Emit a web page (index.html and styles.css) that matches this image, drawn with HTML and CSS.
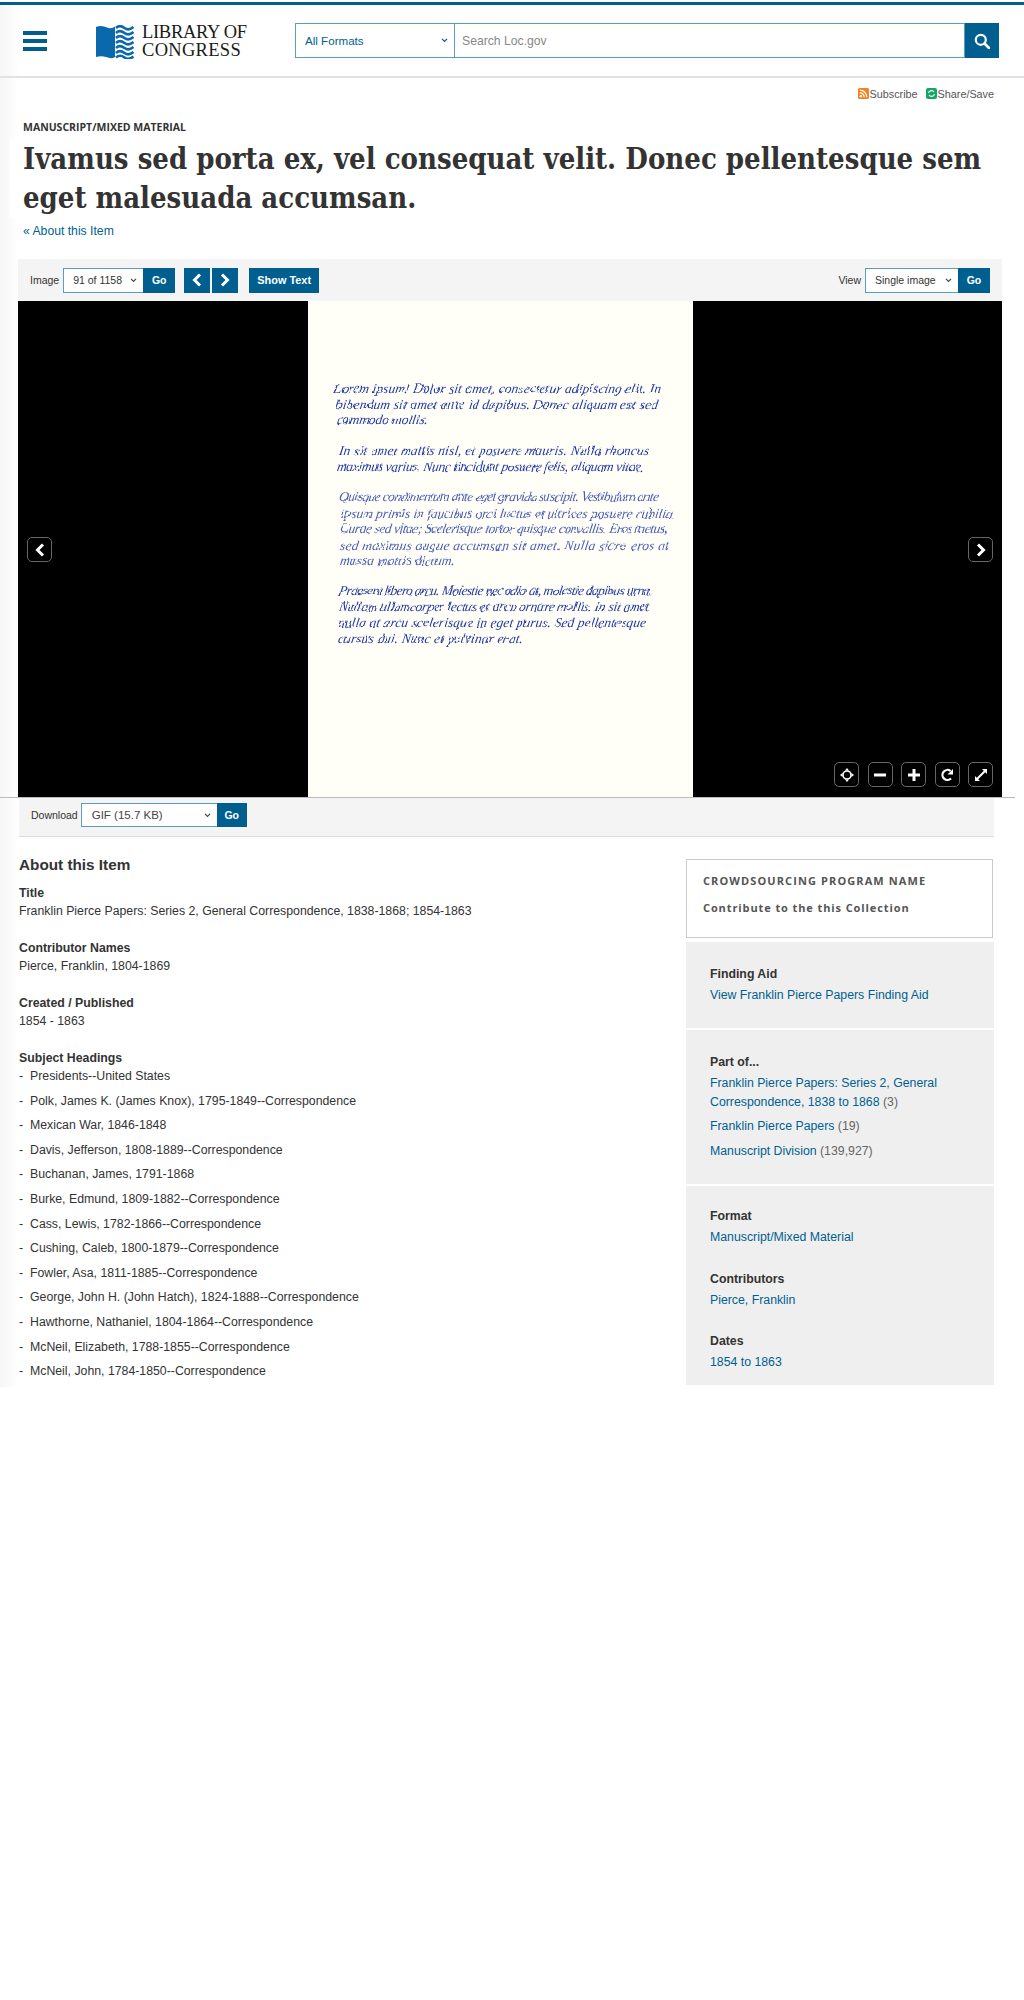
FILE: index.html
```html
<!DOCTYPE html>
<html lang="en">
<head>
    <meta charset="UTF-8">
    <meta name="viewport" content="width=device-width, initial-scale=1.0">
    <title>Library of Congress - Item viewer</title>
    <link rel="stylesheet" href="styles.css">
</head>
<body>

    <!-- Site header -->
    <header class="site-header">
        <button class="menu-btn" aria-label="Menu">
            <span></span><span></span><span></span>
        </button>
        <a class="logo" href="#">
            <svg class="logo-mark" viewBox="0 0 38 34" width="38" height="34">
                <path d="M0 2 C4 0 8 1 11 2.5 C14 4 17 3 19 1.5 L19 32 C16 34 13 33 10 32 C7 31 3 31 0 32 Z" fill="#0a68ad"/>
                <g fill="none" stroke="#0a68ad" stroke-width="2.6">
                    <path d="M20 3 C23 0 26 1 28.5 3 S34 5 37.5 2"/>
                    <path d="M20 8 C23 5 26 6 28.5 8 S34 10 37.5 7"/>
                    <path d="M20 13 C23 10 26 11 28.5 13 S34 15 37.5 12"/>
                    <path d="M20 18 C23 15 26 16 28.5 18 S34 20 37.5 17"/>
                    <path d="M20 23 C23 20 26 21 28.5 23 S34 25 37.5 22"/>
                    <path d="M20 28 C23 25 26 26 28.5 28 S34 30 37.5 27"/>
                    <path d="M20 32.5 C23 30 26 30.5 28.5 32.5 S34 34 37.5 31.5"/>
                </g>
            </svg>
            <span class="logo-text">
                <span class="logo-top">LIBRARY OF</span>
                <span class="logo-bottom">CONGRESS</span>
            </span>
        </a>
        <form class="search-form">
            <div class="search-select">
                <span>All Formats</span>
                <svg class="chevron" viewBox="0 0 8 6" width="7" height="5"><path d="M1 1 L4 4 L7 1" fill="none" stroke="#005f8f" stroke-width="1.5"/></svg>
            </div>
            <div class="search-input">Search Loc.gov</div>
            <button class="search-btn" aria-label="Search">
                <svg viewBox="0 0 16 16" width="16" height="16"><circle cx="6.8" cy="6.8" r="5" fill="none" stroke="#fff" stroke-width="2.2"/><path d="M10.5 10.5 L15 15" stroke="#fff" stroke-width="2.6" stroke-linecap="round"/></svg>
            </button>
        </form>
    </header>

    <main class="page">
        <div class="share-row">
            <a href="#">
                <svg viewBox="0 0 11 11" width="11" height="11"><rect width="11" height="11" rx="1.5" fill="#f58220"/><circle cx="2.8" cy="8.2" r="1.2" fill="#fff"/><path d="M1.8 4.8 A4.4 4.4 0 0 1 6.2 9.2 M1.8 2.2 A7 7 0 0 1 8.8 9.2" fill="none" stroke="#fff" stroke-width="1.3"/></svg>
                Subscribe
            </a>
            <a href="#">
                <svg viewBox="0 0 11 11" width="11" height="11"><rect width="11" height="11" rx="2" fill="#12a862"/><path d="M2.5 5 A3 3 0 0 1 8 4 M8.5 6 A3 3 0 0 1 3 7" fill="none" stroke="#fff" stroke-width="1.2"/></svg>
                Share/Save
            </a>
        </div>

        <div class="item-head">
            <div class="item-type">MANUSCRIPT/MIXED MATERIAL</div>
            <h1>Ivamus sed porta ex, vel consequat velit. Donec pellentesque sem eget malesuada accumsan.</h1>
            <a class="back-link" href="#">« About this Item</a>
        </div>

        <!-- Viewer toolbar -->
        <div class="viewer-bar">
            <label>Image</label>
            <div class="field">
                <div class="select image-select"><span>91 of 1158</span>
                    <svg class="chevron" viewBox="0 0 8 6" width="7" height="5"><path d="M1 1 L4 4 L7 1" fill="none" stroke="#444" stroke-width="1.4"/></svg>
                </div>
                <button class="go-btn">Go</button>
            </div>
            <div class="pager">
                <button class="page-btn" aria-label="Previous">
                    <svg viewBox="0 0 10 14" width="10" height="14"><path d="M8 1.5 L2.5 7 L8 12.5" fill="none" stroke="#fff" stroke-width="3"/></svg>
                </button>
                <button class="page-btn" aria-label="Next">
                    <svg viewBox="0 0 10 14" width="10" height="14"><path d="M2 1.5 L7.5 7 L2 12.5" fill="none" stroke="#fff" stroke-width="3"/></svg>
                </button>
            </div>
            <button class="text-btn">Show Text</button>
            <label class="view-label">View</label>
            <div class="field">
                <div class="select view-select"><span>Single image</span>
                    <svg class="chevron" viewBox="0 0 8 6" width="7" height="5"><path d="M1 1 L4 4 L7 1" fill="none" stroke="#444" stroke-width="1.4"/></svg>
                </div>
                <button class="go-btn">Go</button>
            </div>
        </div>

        <!-- Image viewer -->
        <div class="viewer">
            <div class="sheet">
                <svg class="hand" viewBox="0 0 385 496" width="385" height="496">
                    <defs>
                        <filter id="pen" filterUnits="userSpaceOnUse" x="0" y="0" width="385" height="496">
                            <feTurbulence type="fractalNoise" baseFrequency="0.09" numOctaves="2" seed="4"/>
                            <feDisplacementMap in="SourceGraphic" scale="3" xChannelSelector="R" yChannelSelector="G"/>
                        </filter>
                    </defs>
                    <g filter="url(#pen)">
                        <text x="25" y="92" textLength="327">Lorem ipsum! Dolor sit amet, consectetur adipiscing elit. In</text>
                        <text x="27" y="108" textLength="322">bibendum sit amet ante id dapibus. Donec aliquam est sed</text>
                        <text x="28" y="123" textLength="91">commodo mollis.</text>
                        <text x="30" y="154" textLength="310">In sit amet mattis nisl, et posuere mauris. Nulla rhoncus</text>
                        <text x="28" y="170" textLength="307">maximus varius. Nunc tincidunt posuere felis, aliquam vitae.</text>
                        <g class="hand-light">
                            <text x="30" y="200" textLength="320">Quisque condimentum ante eget gravida suscipit. Vestibulum ante</text>
                            <text x="32" y="217" textLength="335">ipsum primis in faucibus orci luctus et ultrices posuere cubilia.</text>
                            <text x="31" y="232" textLength="328">Curae sed vitae; Scelerisque tortor quisque convallis. Eros metus,</text>
                            <text x="31" y="249" textLength="329">sed maximus augue accumsan sit amet. Nulla sicra eros at</text>
                            <text x="31" y="264" textLength="115">massa mattis dictum.</text>
                        </g>
                        <text x="30" y="294" textLength="314">Praesent libero arcu. Molestie nec odio at, molestie dapibus urna.</text>
                        <text x="30" y="310" textLength="310">Nullam ullamcorper lectus et arcu ornare mollis. In sit amet</text>
                        <text x="29" y="326" textLength="308">nulla at arcu scelerisque in eget purus. Sed pellentesque</text>
                        <text x="29" y="342" textLength="185">cursus dui. Nunc et pulvinar erat.</text>
                    </g>
                </svg>
            </div>
            <button class="ctl ctl-prev" aria-label="Previous">
                <svg viewBox="0 0 12 14" width="12" height="14"><path d="M9 1.5 L3.5 7 L9 12.5" fill="none" stroke="#fff" stroke-width="3"/></svg>
            </button>
            <button class="ctl ctl-next" aria-label="Next">
                <svg viewBox="0 0 12 14" width="12" height="14"><path d="M3 1.5 L8.5 7 L3 12.5" fill="none" stroke="#fff" stroke-width="3"/></svg>
            </button>
            <div class="ctl-group">
                <button class="ctl" aria-label="Home">
                    <svg viewBox="0 0 14 14" width="14" height="14"><circle cx="7" cy="7" r="4" fill="none" stroke="#fff" stroke-width="1.6"/><path d="M7 0 L9 2.5 H5 Z M7 14 L9 11.5 H5 Z M0 7 L2.5 5 V9 Z M14 7 L11.5 5 V9 Z" fill="#fff"/></svg>
                </button>
                <button class="ctl" aria-label="Zoom out">
                    <svg viewBox="0 0 14 14" width="14" height="14"><path d="M1 7 H13" stroke="#fff" stroke-width="3"/></svg>
                </button>
                <button class="ctl" aria-label="Zoom in">
                    <svg viewBox="0 0 14 14" width="14" height="14"><path d="M1 7 H13 M7 1 V13" stroke="#fff" stroke-width="3"/></svg>
                </button>
                <button class="ctl" aria-label="Rotate">
                    <svg viewBox="0 0 14 14" width="14" height="14"><path d="M11 10.5 A5 5 0 1 1 10.5 3" fill="none" stroke="#fff" stroke-width="2.2"/><path d="M13 1 V6.5 H7.5 Z" fill="#fff"/></svg>
                </button>
                <button class="ctl" aria-label="Full screen">
                    <svg viewBox="0 0 14 14" width="14" height="14"><path d="M3 11 L11 3" stroke="#fff" stroke-width="2"/><path d="M8 1 H13 V6 Z M1 8 V13 H6 Z" fill="#fff"/></svg>
                </button>
            </div>
        </div>

        <div class="viewer-rule"></div>

        <div class="download-bar">
            <label>Download</label>
            <div class="field field-download">
                <div class="select download-select"><span>GIF (15.7 KB)</span>
                    <svg class="chevron" viewBox="0 0 8 6" width="7" height="5"><path d="M1 1 L4 4 L7 1" fill="none" stroke="#444" stroke-width="1.4"/></svg>
                </div>
                <button class="go-btn go-wide">Go</button>
            </div>
        </div>

        <!-- Item details and sidebar -->
        <div class="details">
            <section class="about">
                <h2>About this Item</h2>
                <h3>Title</h3>
                <p>Franklin Pierce Papers: Series 2, General Correspondence, 1838-1868; 1854-1863</p>
                <h3>Contributor Names</h3>
                <p>Pierce, Franklin, 1804-1869</p>
                <h3>Created / Published</h3>
                <p>1854 - 1863</p>
                <h3>Subject Headings</h3>
                <ul class="subjects">
                    <li>Presidents--United States</li>
                    <li>Polk, James K. (James Knox), 1795-1849--Correspondence</li>
                    <li>Mexican War, 1846-1848</li>
                    <li>Davis, Jefferson, 1808-1889--Correspondence</li>
                    <li>Buchanan, James, 1791-1868</li>
                    <li>Burke, Edmund, 1809-1882--Correspondence</li>
                    <li>Cass, Lewis, 1782-1866--Correspondence</li>
                    <li>Cushing, Caleb, 1800-1879--Correspondence</li>
                    <li>Fowler, Asa, 1811-1885--Correspondence</li>
                    <li>George, John H. (John Hatch), 1824-1888--Correspondence</li>
                    <li>Hawthorne, Nathaniel, 1804-1864--Correspondence</li>
                    <li>McNeil, Elizabeth, 1788-1855--Correspondence</li>
                    <li>McNeil, John, 1784-1850--Correspondence</li>
                </ul>
            </section>

            <aside class="sidebar">
                <div class="crowd-box">
                    <div class="crowd-name">CROWDSOURCING PROGRAM NAME</div>
                    <div class="crowd-link">Contribute to the this Collection</div>
                </div>
                <div class="panel panel-aid">
                    <h4>Finding Aid</h4>
                    <a href="#">View Franklin Pierce Papers Finding Aid</a>
                </div>
                <div class="panel panel-part">
                    <h4>Part of...</h4>
                    <div class="part-item"><a href="#">Franklin Pierce Papers: Series 2, General Correspondence, 1838 to 1868</a> (3)</div>
                    <div class="part-item"><a href="#">Franklin Pierce Papers</a> (19)</div>
                    <div class="part-item"><a href="#">Manuscript Division</a> (139,927)</div>
                </div>
                <div class="panel panel-facets">
                    <h4>Format</h4>
                    <a href="#">Manuscript/Mixed Material</a>
                    <h4>Contributors</h4>
                    <a href="#">Pierce, Franklin</a>
                    <h4>Dates</h4>
                    <a href="#">1854 to 1863</a>
                </div>
            </aside>
        </div>
    </main>

</body>
</html>
```

FILE: styles.css
```css
* {
    box-sizing: border-box;
    margin: 0;
    padding: 0;
}

body {
    font-family: 'Liberation Sans', Arial, sans-serif;
    font-size: 12.3px;
    color: #333;
    background: #fff;
}

a {
    color: #005f8f;
    text-decoration: none;
}

button {
    border: none;
    font-family: inherit;
    cursor: pointer;
}

/* Header */
.site-header {
    display: flex;
    align-items: flex-start;
    height: 76px;
    margin-top: 2px;
    border-top: 3px solid #005f8f;
    border-bottom: 2px solid #e2e2e2;
    padding: 18px 25px 0 23px;
    background: linear-gradient(to right, #f6f6f6, #fff 20px);
}

.menu-btn {
    display: flex;
    flex-direction: column;
    gap: 4px;
    width: 24px;
    margin-top: 8px;
    background: none;
}

.menu-btn span {
    display: block;
    height: 4px;
    background: #005f8f;
}

.logo {
    display: flex;
    align-items: center;
    gap: 8px;
    width: 199px;
    margin-left: 49px;
    margin-top: 1px;
}

.logo-text {
    font-family: 'Liberation Serif', serif;
    font-size: 18.5px;
    line-height: 17.5px;
    color: #1a1a1a;
}

.logo-top,
.logo-bottom {
    display: block;
    white-space: nowrap;
}

.logo-top {
    letter-spacing: -0.3px;
}

.logo-bottom {
    letter-spacing: 0.3px;
}

.search-form {
    display: flex;
    flex: 1;
    height: 35px;
    color: #005f8f;
    font-size: 11.6px;
}

.search-select {
    display: flex;
    align-items: center;
    justify-content: space-between;
    width: 159px;
    padding: 0 6px 0 9px;
    border: 1px solid #5b9dbd;
    border-right: none;
}

.search-input {
    flex: 1;
    display: flex;
    align-items: center;
    padding-left: 7px;
    border: 1px solid #5b9dbd;
    color: #888;
    font-size: 12.2px;
}

.search-btn {
    display: flex;
    align-items: center;
    justify-content: center;
    width: 34px;
    background: #005f8f;
}

/* Page */
.page {
    padding: 0 22px 0 18px;
    background: linear-gradient(to right, #f6f6f6, #fff 18px) no-repeat;
}

.share-row {
    display: flex;
    justify-content: flex-end;
    gap: 8px;
    padding: 10px 8px 0 0;
    height: 29px;
    font-size: 10.8px;
}

.share-row a {
    display: flex;
    align-items: center;
    gap: 1px;
    height: 11px;
    color: #555;
}

.item-head {
    padding: 13px 0 0 5px;
    height: 152px;
}

.item-type {
    font-family: 'Open Sans', sans-serif;
    font-weight: 700;
    font-size: 10.5px;
    line-height: 15px;
}

h1 {
    font-family: 'DejaVu Serif', serif;
    font-stretch: condensed;
    font-size: 29px;
    line-height: 38.5px;
    margin: 5px 0 0 -13px;
    padding-left: 13px;
    background: #fff;
    color: #333;
}

.back-link {
    display: block;
    margin-top: 7px;
    font-size: 12.2px;
}

/* Toolbar */
.viewer-bar,
.download-bar {
    display: flex;
    background: #f4f4f4;
    font-size: 10.5px;
}

.viewer-bar {
    align-items: center;
    height: 42px;
    padding: 0 12px;
}

.viewer-bar label {
    margin-right: 4px;
}

.field {
    display: flex;
    height: 25px;
}

.select {
    display: flex;
    align-items: center;
    justify-content: space-between;
    background: #fff;
    border: 1px solid #5b9dbd;
    border-right: none;
    padding: 0 6px 0 9px;
    font-size: 10.5px;
}

.image-select {
    width: 80px;
}

.view-select {
    width: 93px;
}

.download-select {
    width: 136px;
    padding-left: 10px;
}

.go-btn {
    width: 32px;
    background: #005f8f;
    color: #fff;
    font-size: 10.5px;
    font-weight: 700;
}

.go-wide {
    width: 30px;
}

.pager {
    display: flex;
    gap: 2px;
    margin-left: 9px;
}

.page-btn {
    display: flex;
    align-items: center;
    justify-content: center;
    width: 26px;
    height: 25px;
    background: #005f8f;
}

.text-btn {
    height: 25px;
    width: 70px;
    margin-left: 11px;
    background: #005f8f;
    color: #fff;
    font-size: 10.9px;
    font-weight: 700;
}

.view-label {
    margin-left: auto;
}

/* Viewer */
.viewer {
    position: relative;
    display: flex;
    justify-content: center;
    height: 496px;
    background: #000;
    padding-right: 19px;
}

.sheet {
    width: 385px;
    background: #fffff7;
}

.hand {
    display: block;
    font-family: 'Liberation Serif', serif;
    font-style: italic;
    font-size: 13.5px;
    fill: #2238a6;
}

.hand text {
    transform-box: fill-box;
    transform-origin: left bottom;
    transform: skewX(-9deg);
}

.hand-light {
    fill: #4a5cb8;
}

.ctl {
    display: flex;
    align-items: center;
    justify-content: center;
    width: 25px;
    height: 25px;
    background: #000;
    border: 1px solid #666;
    border-radius: 5px;
}

.ctl-prev,
.ctl-next {
    position: absolute;
    top: 236px;
}

.ctl-prev {
    left: 9px;
}

.ctl-next {
    right: 9px;
}

.ctl-group {
    position: absolute;
    right: 9px;
    bottom: 10px;
    display: flex;
    gap: 8.5px;
}

.viewer-rule {
    height: 1px;
    margin: 0 -13px 0 -18px;
    background: #bbb;
}

.download-bar {
    height: 39px;
    width: 975px;
    margin-left: 1px;
    padding: 5px 0 0 12px;
    border-bottom: 1px solid #ddd;
    gap: 3px;
    line-height: 24px;
}

.field-download {
    height: 24px;
}

.download-bar .select {
    font-size: 11.5px;
    color: #444;
}

/* Details */
.details {
    display: flex;
    justify-content: space-between;
    padding: 18px 8px 0 1px;
}

.about {
    width: 600px;
}

h2 {
    font-size: 15.3px;
    line-height: 20px;
    margin-bottom: 9px;
    color: #333;
}

h3 {
    font-size: 12.3px;
    line-height: 18px;
    color: #333;
}

.about p {
    line-height: 19px;
    margin-bottom: 18px;
}

.subjects {
    list-style: none;
    line-height: 19px;
}

.subjects li {
    position: relative;
    padding-left: 11px;
    margin-bottom: 5.6px;
}

.subjects li::before {
    content: "-";
    position: absolute;
    left: 0;
}

.sidebar {
    width: 308px;
    margin-top: 4px;
}

.crowd-box {
    width: 307px;
    height: 79px;
    padding: 14px 16px;
    border: 1px solid #ccc;
    margin-bottom: 4px;
    font-family: 'Open Sans', sans-serif;
    font-weight: 700;
    font-size: 11px;
    line-height: 14px;
    letter-spacing: 0.9px;
    color: #555;
}

.crowd-name {
    letter-spacing: 1.1px;
}

.crowd-link {
    margin-top: 12.5px;
}

.panel {
    background: #efefef;
    padding: 23px 24px 0;
    line-height: 18.5px;
    border-bottom: 2px solid #fff;
}

.panel h4 {
    font-size: 12.3px;
    line-height: 18px;
    margin-bottom: 3px;
    color: #333;
}

.panel-aid {
    height: 88px;
}

.panel-part {
    height: 156px;
    color: #666;
}

.part-item {
    margin-bottom: 6px;
}

.panel-facets {
    height: 199px;
    padding-top: 21px;
    border-bottom: none;
}

.panel-facets a {
    display: block;
    margin-bottom: 23px;
}
```
